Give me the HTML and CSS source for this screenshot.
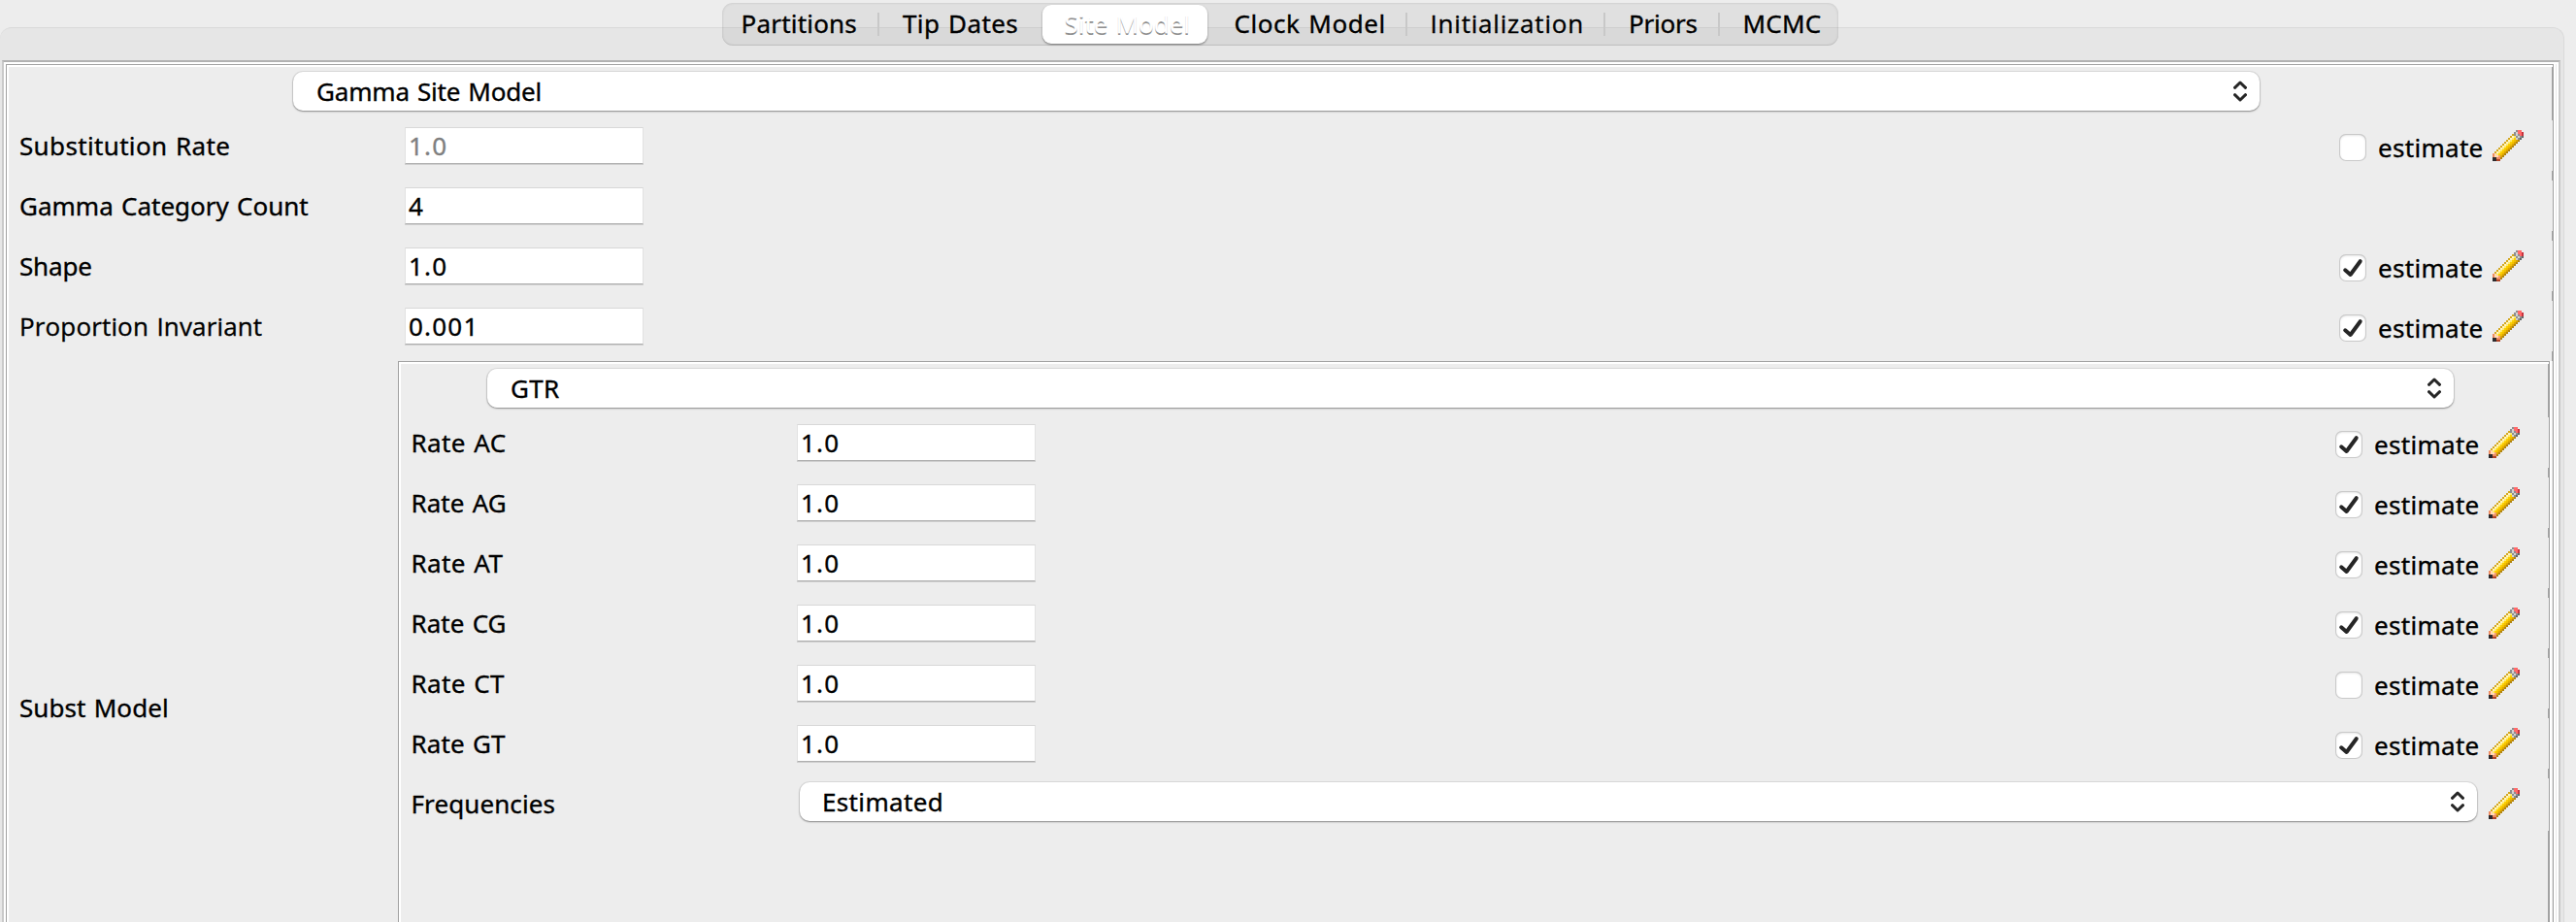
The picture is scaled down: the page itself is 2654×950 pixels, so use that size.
FILE: index.html
```html
<!DOCTYPE html>
<html lang="en">
<head>
<meta charset="utf-8">
<title>Site Model</title>
<link rel="stylesheet" href="styles.css">
</head>
<body>
<svg class="defs" width="0" height="0">
  <symbol id="pencil" viewBox="0 0 16 16">
    <g fill="none" stroke-width="1" shape-rendering="crispEdges">
      <path stroke="#d4a820" d="M10 2.5h1M9 3.5h1M8 4.5h1M7 5.5h1M6 6.5h1M5 7.5h1M4 8.5h1M3 9.5h1M2 10.5h1M1 11.5h1"/>
      <path stroke="#fff6c8" d="M10 3.5h1M9 4.5h1M8 5.5h1M7 6.5h1M6 7.5h1M5 8.5h1M4 9.5h1M3 10.5h1M2 11.5h1"/>
      <path stroke="#ffea70" d="M11 3.5h1M10 4.5h1M9 5.5h1M8 6.5h1M7 7.5h1M6 8.5h1M5 9.5h1M4 10.5h1M3 11.5h1M2 12.5h1"/>
      <path stroke="#fcd000" d="M11 4.5h1M10 5.5h1M9 6.5h1M8 7.5h1M7 8.5h1M6 9.5h1M5 10.5h1M4 11.5h1M3 12.5h1"/>
      <path stroke="#f2c000" d="M11 5.5h1M10 6.5h1M9 7.5h1M8 8.5h1M7 9.5h1M6 10.5h1M5 11.5h1M4 12.5h1"/>
      <path stroke="#dda400" d="M12 5.5h1M11 6.5h1M10 7.5h1M9 8.5h1M8 9.5h1M7 10.5h1M6 11.5h1M5 12.5h1M4 13.5h1"/>
      <path stroke="#b08410" d="M13 5.5h1M12 6.5h1M11 7.5h1M10 8.5h1M9 9.5h1M8 10.5h1M7 11.5h1M6 12.5h1M5 13.5h1M4 14.5h1"/>
      <path stroke="#8e8e8e" d="M12 .5h1M11 1.5h1M11 2.5h1M13 2.5h1M12 3.5h1M14 3.5h1M13 4.5h1"/>
      <path stroke="#d2d2d2" d="M12 1.5h1M12 2.5h1M13 3.5h1M12 4.5h1"/>
      <path stroke="#666" d="M15 3.5h1M14 4.5h1"/>
      <path stroke="#ff6a6a" d="M13 .5h2M13 1.5h2M14 2.5h1"/>
      <path stroke="#c8323c" d="M15 1.5h1M15 2.5h1"/>
      <path stroke="#ee8c60" d="M0 12.5h1M0 13.5h1M2 14.5h2"/>
      <path stroke="#ffd9b8" d="M1 12.5h1M1 13.5h2"/>
      <path stroke="#f7a070" d="M3 13.5h1"/>
      <path stroke="#2c2a2c" d="M0 14.5h2M0 15.5h2"/>
      <path stroke="#b04428" d="M2 15.5h2"/>
    </g>
  </symbol>
  <symbol id="check" viewBox="0 0 28 28">
    <path d="M6.2 16.3 11.6 21 21.7 7.2" fill="none" stroke="#262626" stroke-width="4" stroke-linecap="round" stroke-linejoin="round"/>
  </symbol>
  <symbol id="updown" viewBox="0 0 14 22">
    <path d="M1.5 7.3 7 2 12.5 7.3M1.5 14.7 7 20 12.5 14.7" fill="none" stroke="#262626" stroke-width="3" stroke-linecap="round" stroke-linejoin="round"/>
  </symbol>
</svg>

<nav class="tabs">
  <span class="tab partitions">Partitions</span>
  <span class="tab dates">Tip Dates</span>
  <span class="tab site selected">Site Model</span>
  <span class="tab clock">Clock Model</span>
  <span class="tab init">Initialization</span>
  <span class="tab priors">Priors</span>
  <span class="tab mcmc">MCMC</span>
</nav>

<main class="pane">
  <div class="frame">
    <section class="group">
      <div class="combo top"><span class="tight">Gamma Site Model</span><svg class="updown"><use href="#updown"/></svg></div>

      <div class="row">
        <span class="label t50">Substitution Rate</span><span class="field disabled">1.0</span>
        <span class="actions"><span class="box"></span><span class="est">estimate</span><svg class="pencil"><use href="#pencil"/></svg></span>
      </div>
      <div class="row">
        <span class="label t00">Gamma Category Count</span><span class="field">4</span>
      </div>
      <div class="row">
        <span class="label tight">Shape</span><span class="field">1.0</span>
        <span class="actions"><span class="box"><svg><use href="#check"/></svg></span><span class="est">estimate</span><svg class="pencil"><use href="#pencil"/></svg></span>
      </div>
      <div class="row">
        <span class="label plain-i">Proportion Invariant</span><span class="field">0.001</span>
        <span class="actions"><span class="box"><svg><use href="#check"/></svg></span><span class="est">estimate</span><svg class="pencil"><use href="#pencil"/></svg></span>
      </div>

      <div class="subst">
        <span class="subst-label">Subst Model</span>
        <section class="group inner">
          <div class="combo top"><span class="t50">GTR</span><svg class="updown"><use href="#updown"/></svg></div>

          <div class="row">
            <span class="label t50">Rate AC</span><span class="field">1.0</span>
            <span class="actions"><span class="box"><svg><use href="#check"/></svg></span><span class="est">estimate</span><svg class="pencil"><use href="#pencil"/></svg></span>
          </div>
          <div class="row">
            <span class="label t10">Rate AG</span><span class="field">1.0</span>
            <span class="actions"><span class="box"><svg><use href="#check"/></svg></span><span class="est">estimate</span><svg class="pencil"><use href="#pencil"/></svg></span>
          </div>
          <div class="row">
            <span class="label t50">Rate AT</span><span class="field">1.0</span>
            <span class="actions"><span class="box"><svg><use href="#check"/></svg></span><span class="est">estimate</span><svg class="pencil"><use href="#pencil"/></svg></span>
          </div>
          <div class="row">
            <span class="label t10">Rate CG</span><span class="field">1.0</span>
            <span class="actions"><span class="box"><svg><use href="#check"/></svg></span><span class="est">estimate</span><svg class="pencil"><use href="#pencil"/></svg></span>
          </div>
          <div class="row">
            <span class="label t50">Rate CT</span><span class="field">1.0</span>
            <span class="actions"><span class="box"></span><span class="est">estimate</span><svg class="pencil"><use href="#pencil"/></svg></span>
          </div>
          <div class="row">
            <span class="label t20">Rate GT</span><span class="field">1.0</span>
            <span class="actions"><span class="box"><svg><use href="#check"/></svg></span><span class="est">estimate</span><svg class="pencil"><use href="#pencil"/></svg></span>
          </div>
          <div class="row">
            <span class="label t20">Frequencies</span>
            <div class="combo wide"><span class="t50">Estimated</span><svg class="updown"><use href="#updown"/></svg></div>
            <svg class="pencil"><use href="#pencil"/></svg>
          </div>
        </section>
      </div>
    </section>
  </div>
</main>
</body>
</html>
```
FILE: styles.css
```css
* { box-sizing: border-box; }

html, body { height: 950px; overflow: hidden; }

body {
  margin: 0;
  width: 2654px;
  background: #ededed;
  color: #000;
  font: 26px/40px "Noto Sans", "Open Sans", sans-serif;
  -webkit-text-stroke: .35px;
  word-spacing: 1.5px;
  white-space: nowrap;
  display: flow-root;
}

svg { display: block; flex: none; }
.defs { position: absolute; }

/* Letter tracking */
.tight { letter-spacing: -.18px; }
.t00 { letter-spacing: 0; }
.t10 { letter-spacing: .02px; }
.t20 { letter-spacing: .1px; }
.t50 { letter-spacing: .35px; }

/* Segmented tab bar */
.tabs {
  position: relative;
  z-index: 1;
  display: flex;
  width: 1150px;
  height: 44px;
  margin: 3px 0 0 744px;
  padding-top: 1px;
  border-radius: 11px;
  background: rgba(0, 0, 0, .055);
  box-shadow: inset 0 0 2px 1px rgba(0, 0, 0, .07), inset 0 -1px 0 rgba(0, 0, 0, .06);
}
.tab {
  height: 40px;
  background: linear-gradient(#c8c8c8, #c8c8c8) right 9px / 2px 24px no-repeat;
}
.partitions { width: 162px; padding-left: 19.5px; letter-spacing: .2px; }
.dates { width: 168px; padding-left: 24px; letter-spacing: .4px; background: none; }
.site { width: 170px; padding-left: 22.5px; letter-spacing: -.05px; }
.clock { width: 206px; padding-left: 27.5px; letter-spacing: .55px; }
.init { width: 204px; padding-left: 23.5px; letter-spacing: .8px; font-family: "Open Sans", sans-serif; }
.priors { width: 118px; padding-left: 24px; letter-spacing: -.25px; }
.mcmc { width: 122px; padding-left: 23.5px; letter-spacing: .2px; background: none; }
.tab.selected {
  height: 40px;
  margin-top: 1px;
  line-height: 38px;
  border-radius: 9px;
  background: #fff;
  color: #fff;
  text-shadow: 0 2px 0 #8f8f8f;
  box-shadow: 0 1px 2px rgba(0, 0, 0, .45);
}

/* Tab pane and its frames */
.pane {
  width: 2642px;
  height: 922px;
  margin-top: -19px;
  padding: 33px 0 0 2px;
  border: solid #dadada;
  border-width: 1px 1px 0 0;
  border-radius: 12px 12px 0 0;
  background: #e6e6e6;
}
.frame {
  width: 2636px;
  height: 888px;
  padding: 2px 0 0 2px;
  border: 2px solid #c9c9c9;
  border-top-color: #b1b1b1;
  border-bottom: 0;
  background: #fff;
}
.group {
  --ticks: 248px;
  width: 2625px;
  height: 884px;
  padding-top: 7px;
  border: 1px solid #a2a2a2;
  border-bottom: 0;
  background:
    linear-gradient(#a2a2a2, #a2a2a2) right 0 / 1px 57px no-repeat,
    repeating-linear-gradient(#a2a2a2 0 10px, transparent 10px 62px) right 109px / 1px var(--ticks) no-repeat,
    #ededed;
  box-shadow: inset 2px 2px #fff, 2px 0 #fff, 3px 0 #e9e9e9;
}
.inner {
  --ticks: 372px;
  width: 2217px;
  height: 578px;
  background:
    linear-gradient(#a2a2a2, #a2a2a2) right 0 / 1px 57px no-repeat,
    repeating-linear-gradient(#a2a2a2 0 10px, transparent 10px 62px) right 109px / 1px var(--ticks) no-repeat,
    linear-gradient(#a2a2a2, #a2a2a2) right 483px / 1px 100px no-repeat,
    #ededed;
}

/* Drop-down */
.combo {
  display: flex;
  align-items: center;
  justify-content: space-between;
  height: 40px;
  padding: 0 13px 0 24px;
  border-radius: 10px;
  background: #fff;
  box-shadow: 0 0 0 1px rgba(0, 0, 0, .07), 0 1px 2px rgba(0, 0, 0, .38);
}
.combo.top { width: 2026px; margin: 0 0 6px 295px; }
.inner .combo.top { margin-left: 91px; }
.combo.wide { flex: 1; margin: 8px 12px 0 3px; padding-left: 23px; }
.updown { width: 14px; height: 22px; }

/* Parameter rows */
.row {
  display: flex;
  align-items: flex-start;
  height: 62px;
  padding: 0 30px 0 13px;
}
.label { width: 397px; margin-top: 10px; flex: none; }
.label.plain-i { font-family: "Open Sans", sans-serif; letter-spacing: .15px; }
.inner .row { padding-left: 12.5px; }
.inner .label { width: 397.5px; }

.field {
  width: 246px;
  height: 38px;
  margin-top: 11px;
  padding-left: 3px;
  border: 1px solid #e2e2e2;
  border-top-color: #d8d8d8;
  border-bottom-color: #b0b0b0;
  background: #fff;
  box-shadow: 0 1px #cfcfcf;
  line-height: 36px;
  letter-spacing: 1.2px;
}
.field.disabled { color: #808080; }

.actions { display: flex; width: 190px; margin-left: auto; }
.box {
  width: 28px;
  height: 28px;
  margin: 18px 12px 0 0;
  border-radius: 7px;
  background: #fff;
  box-shadow: inset 0 0 0 1px #c9c9c9, inset 0 1px 3px rgba(0, 0, 0, .2);
}
.box svg { width: 28px; height: 28px; }
.est { margin-top: 12px; letter-spacing: .3px; }
.pencil { width: 32px; height: 32px; margin: 14px 0 0 auto; }
.combo + .pencil { margin-left: 0; }

.subst { display: flex; padding: 4px 0 0 13px; }
.subst-label { width: 390px; margin-top: 337px; letter-spacing: .05px; flex: none; }
```
